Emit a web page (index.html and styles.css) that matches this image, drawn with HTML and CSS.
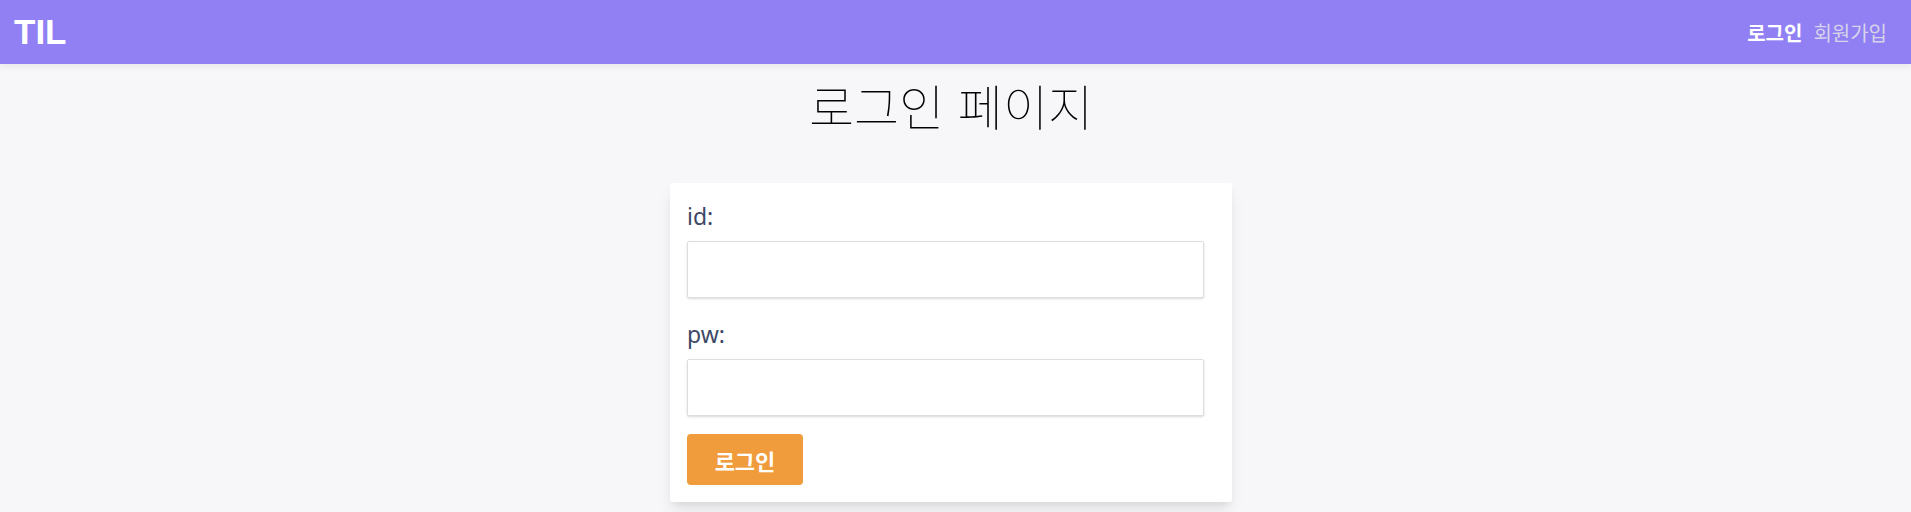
FILE: index.html
```html
<!DOCTYPE html>
<html lang="ko">
<head>
<meta charset="utf-8">
<title>TIL - 로그인</title>
<link rel="stylesheet" href="styles.css">
</head>
<body>
<header class="topbar">
  <a class="brand" href="#">TIL</a>
  <nav class="nav">
    <a class="nav-link active" href="#">로그인</a>
    <a class="nav-link" href="#">회원가입</a>
  </nav>
</header>
<main class="main">
  <h1 class="page-title">로그인 페이지</h1>
  <form class="card">
    <div class="field">
      <label class="label" for="id">id:</label>
      <input class="input" id="id" type="text">
    </div>
    <div class="field">
      <label class="label" for="pw">pw:</label>
      <input class="input" id="pw" type="password">
    </div>
    <button class="btn" type="button">로그인</button>
  </form>
</main>
</body>
</html>
```

FILE: styles.css
```css
* { box-sizing: border-box; }

html, body {
  margin: 0;
  padding: 0;
}

body {
  background: #f7f7f9;
  font-family: "Noto Sans", "Noto Sans CJK KR", sans-serif;
  color: #111;
  height: 512px;
  overflow: hidden;
}

.topbar {
  height: 64px;
  background: #9080f4;
  display: flex;
  align-items: center;
  justify-content: space-between;
  padding: 0 24px 0 14px;
  box-shadow: 0 2px 8px rgba(0, 0, 0, 0.08);
  position: relative;
  z-index: 1;
}

.brand {
  color: #fff;
  font-family: "Liberation Sans", Arial, sans-serif;
  font-weight: 700;
  font-size: 35px;
  text-decoration: none;
}

.nav {
  display: flex;
  gap: 11px;
}

.nav-link {
  font-family: "Noto Sans CJK KR", sans-serif;
  color: #d6d3ea;
  font-size: 20px;
  text-decoration: none;
}

.nav-link.active {
  color: #fff;
  font-weight: 700;
}

.main {
  display: flex;
  flex-direction: column;
  align-items: center;
  padding-right: 9px;
}

.page-title {
  margin: 0;
  padding-top: 5px;
  font-family: "Noto Sans CJK KR", sans-serif;
  font-weight: 100;
  font-size: 49px;
  line-height: 72px;
  color: #000;
}

.card {
  margin-top: 42px;
  width: 562px;
  background: #fff;
  border-radius: 3px;
  padding: 17px 28px 17px 17px;
  box-shadow: 0 10px 15px -3px rgba(0, 0, 0, 0.1), 0 4px 6px -2px rgba(0, 0, 0, 0.05);
  display: flex;
  flex-direction: column;
  align-items: flex-start;
}

.field {
  width: 100%;
  display: flex;
  flex-direction: column;
  margin-bottom: 20px;
}

.field + .field {
  margin-bottom: 18px;
}

.label {
  font-size: 23px;
  line-height: 32px;
  color: #3d4866;
  margin-bottom: 9px;
}

.input {
  width: 100%;
  height: 57px;
  border: 1px solid #dcdee4;
  border-radius: 2px;
  background: #fff;
  box-shadow: 0 1px 3px rgba(0, 0, 0, 0.1), 0 1px 2px rgba(0, 0, 0, 0.06);
  font-size: 18px;
  padding: 0 12px;
  outline: none;
}

.btn {
  width: 116px;
  height: 51px;
  background: #f09c3d;
  color: #fff;
  border: none;
  border-radius: 4px;
  font-family: "Noto Sans CJK KR", sans-serif;
  font-weight: 700;
  font-size: 22px;
  padding: 0;
  cursor: pointer;
}
```
